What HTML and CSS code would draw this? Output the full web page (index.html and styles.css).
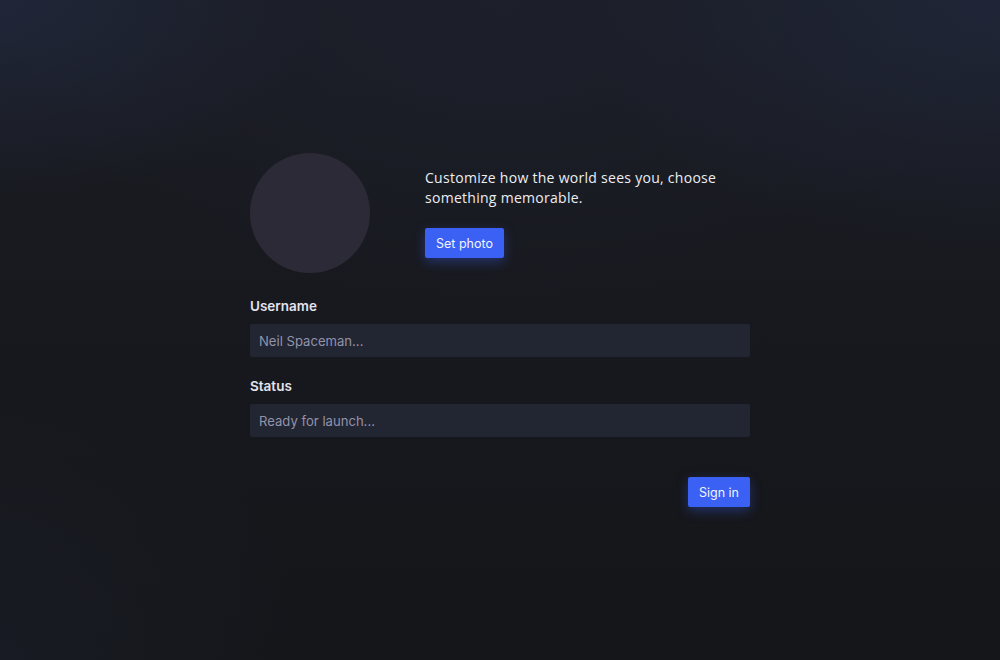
FILE: index.html
```html
<!DOCTYPE html>
<html lang="en">
<head>
<meta charset="utf-8">
<title>Profile</title>
<link rel="stylesheet" href="styles.css">
</head>
<body>
<main class="page">
  <form class="card">
    <div class="profile">
      <div class="avatar"></div>
      <div class="intro">
        <p class="intro-text">Customize how the world sees you, choose something memorable.</p>
        <button type="button" class="btn">Set photo</button>
      </div>
    </div>
    <label class="label" for="username">Username</label>
    <input class="field" id="username" type="text" placeholder="Neil Spaceman...">
    <label class="label label-status" for="status">Status</label>
    <input class="field" id="status" type="text" placeholder="Ready for launch...">
    <div class="actions">
      <button type="button" class="btn">Sign in</button>
    </div>
  </form>
</main>
</body>
</html>
```
FILE: styles.css
```css
* { box-sizing: border-box; }
html, body { margin: 0; height: 100%; }
body {
  background:
    radial-gradient(ellipse 320px 200px at 0% 0%, rgba(34,42,64,0.75), rgba(34,42,64,0) 100%),
    radial-gradient(ellipse 420px 260px at 100% 0%, rgba(34,42,64,0.7), rgba(34,42,64,0) 100%),
    radial-gradient(ellipse 500px 300px at 50% 0%, rgba(30,34,48,0.6), rgba(30,34,48,0) 100%),
    radial-gradient(ellipse 300px 300px at 0% 100%, rgba(26,30,42,0.6), rgba(26,30,42,0) 100%),
    linear-gradient(180deg, #1a1c23 0%, #17181d 60%, #151619 100%);
  font-family: Inter, "Liberation Sans", sans-serif;
  color: #e6e6ee;
}
.page {
  display: flex;
  justify-content: center;
  padding-top: 153px;
}
.card {
  width: 500px;
  display: flex;
  flex-direction: column;
}
.profile {
  display: flex;
  align-items: center;
  gap: 55px;
  margin-bottom: 25px;
}
.avatar {
  width: 120px;
  height: 120px;
  border-radius: 50%;
  background: #2c2a37;
  flex: none;
}
.intro { display: flex; flex-direction: column; align-items: flex-start; }
.intro-text {
  margin: 0 0 20px;
  width: 320px;
  font-family: "Open Sans", sans-serif;
  font-size: 14px;
  line-height: 20px;
  letter-spacing: 0.28px;
  color: #eceef4;
}
.btn {
  border: none;
  border-radius: 2px;
  background: #3a61f3;
  color: #f2f4ff;
  font-family: Inter, sans-serif;
  font-size: 12.5px;
  height: 30px;
  padding: 0 11px;
  box-shadow: 0 4px 12px rgba(58,97,243,0.35);
  cursor: pointer;
}
.label {
  font-size: 13.5px;
  font-weight: 600;
  line-height: 16px;
  color: #e2e3ef;
  margin-bottom: 10px;
}
.label-status { margin-top: 21px; }
.field {
  height: 33px;
  border: none;
  border-radius: 2px;
  background: #222532;
  padding: 0 9px;
  font-family: Inter, sans-serif;
  font-size: 13.1px;
  color: #e6e6ee;
  outline: none;
}
.field::placeholder { color: #9293aa; }
.actions {
  display: flex;
  justify-content: flex-end;
  margin-top: 40px;
}
```
